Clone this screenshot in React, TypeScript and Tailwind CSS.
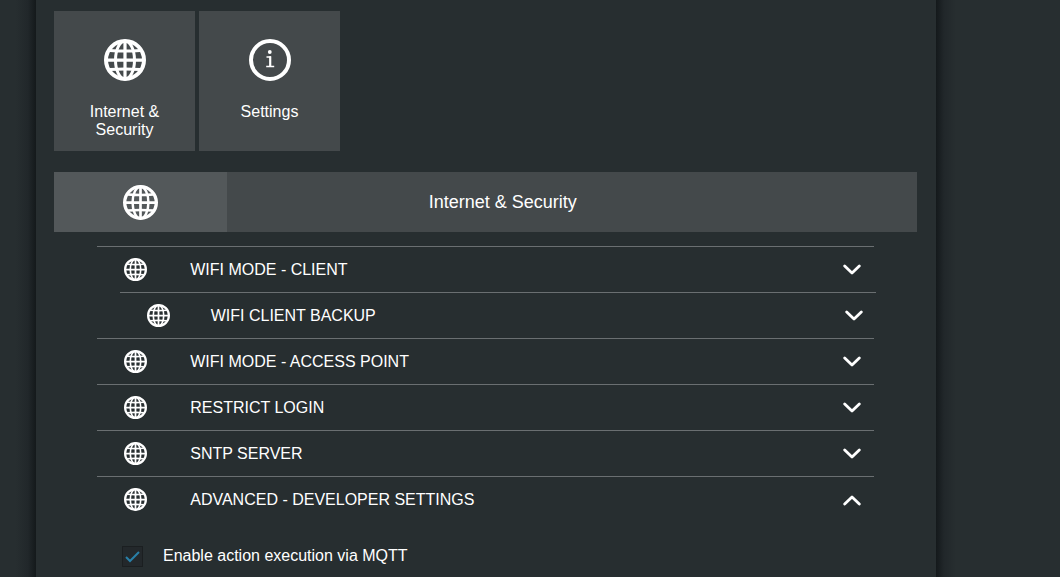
import { useState } from "react";
import clsx from "clsx";

function GlobeIcon({ className }: { className?: string }) {
  return (
    <svg viewBox="0 0 42 42" fill="none" stroke="currentColor" className={className} aria-hidden="true">
      <circle cx="21" cy="21" r="19" strokeWidth="4" />
      <ellipse cx="21" cy="21" rx="9.5" ry="19" strokeWidth="3" />
      <path d="M21 2v38M2 21.2h38" strokeWidth="3.2" />
      <path d="M6 11.5q15 1.2 30 0M6 30.5q15 -1.2 30 0" strokeWidth="3" />
    </svg>
  );
}

function InfoIcon({ className }: { className?: string }) {
  return (
    <svg viewBox="0 0 42 42" fill="none" stroke="currentColor" className={className} aria-hidden="true">
      <circle cx="21" cy="21" r="19" strokeWidth="4" />
      <circle cx="20.8" cy="13" r="1.9" fill="currentColor" stroke="none" />
      <path d="M17.5 18h4.5M17.2 27.4h8" strokeWidth="1.5" />
      <path d="M21.2 17.3v10" strokeWidth="2.2" />
    </svg>
  );
}

function ChevronIcon({ open }: { open: boolean }) {
  return (
    <svg
      viewBox="0 0 18 12"
      fill="none"
      stroke="currentColor"
      strokeWidth="2.8"
      strokeLinecap="round"
      strokeLinejoin="round"
      className={clsx("mr-[13px] h-3 w-[18px] shrink-0", open && "rotate-180")}
      aria-hidden="true"
    >
      <path d="M1.7 2l7.3 7 7.3-7" />
    </svg>
  );
}

const tiles = [
  { label: "Internet & Security", icon: <GlobeIcon className="size-[42px]" /> },
  { label: "Settings", icon: <InfoIcon className="size-[42px]" /> },
];

const sections = [
  { title: "WIFI MODE - CLIENT" },
  { title: "WIFI CLIENT BACKUP", nested: true },
  { title: "WIFI MODE - ACCESS POINT" },
  { title: "RESTRICT LOGIN" },
  { title: "SNTP SERVER" },
  { title: "ADVANCED - DEVELOPER SETTINGS" },
];

export default function App() {
  const [openSection, setOpenSection] = useState("ADVANCED - DEVELOPER SETTINGS");
  const [mqtt, setMqtt] = useState(true);

  return (
    <div className="flex min-h-screen bg-[#272e30] font-['Liberation_Sans',Arial,sans-serif] text-base text-white">
      <div className="w-9 bg-linear-to-l from-[#14191b] via-[#21272a] via-[8px] to-[#272e30] to-[20px]" />
      <main className="flex-1 bg-[#272e30] pt-[11px] pr-[19px] pl-[18px]">
        <nav className="flex gap-1">
          {tiles.map((tile) => (
            <button
              key={tile.label}
              className="flex h-[140px] w-[141px] flex-col items-center gap-[22px] bg-[#44494b] px-6 pt-7 leading-[18px]"
            >
              {tile.icon}
              <span>{tile.label}</span>
            </button>
          ))}
        </nav>

        <header className="mt-[21px] flex h-[60px] bg-[#44494b]">
          <div className="flex w-1/5 items-center justify-center bg-[#53585a]">
            <GlobeIcon className="size-[35px]" />
          </div>
          <h1 className="flex w-[64%] items-center justify-center text-lg">Internet &amp; Security</h1>
        </header>

        <div className="mx-[43px] mt-[14px]">
          {sections.map(({ title, nested }) => (
            <button
              key={title}
              aria-expanded={openSection === title}
              onClick={() => setOpenSection(openSection === title ? "" : title)}
              className={clsx(
                "flex h-[46px] items-center border-t border-[#6a6f71] text-left",
                nested ? "-mr-0.5 ml-[23px] w-[calc(100%-21px)]" : "w-full",
              )}
            >
              <span className="w-[12%] shrink-0 pl-[27px]">
                <GlobeIcon className="size-[23px]" />
              </span>
              <span className="flex-1">{title}</span>
              <ChevronIcon open={openSection === title} />
            </button>
          ))}

          {openSection === "ADVANCED - DEVELOPER SETTINGS" && (
            <label className="mt-[22px] flex items-center gap-5 pl-[25px]">
              <span className="relative size-[21px]">
                <input
                  type="checkbox"
                  checked={mqtt}
                  onChange={(e) => setMqtt(e.target.checked)}
                  className="peer block size-full appearance-none border border-[#1b1f21] bg-[#23282b]"
                />
                <svg
                  viewBox="0 0 21 21"
                  fill="none"
                  stroke="#2980a8"
                  strokeWidth="2"
                  className="pointer-events-none absolute inset-0 hidden peer-checked:block"
                  aria-hidden="true"
                >
                  <path d="M4 11l4 4 9-9" />
                </svg>
              </span>
              Enable action execution via MQTT
            </label>
          )}
        </div>
      </main>
      <div className="w-[124px] bg-linear-to-r from-[#14191b] via-[#21272a] via-[8px] to-[#272e30] to-[20px]" />
    </div>
  );
}
